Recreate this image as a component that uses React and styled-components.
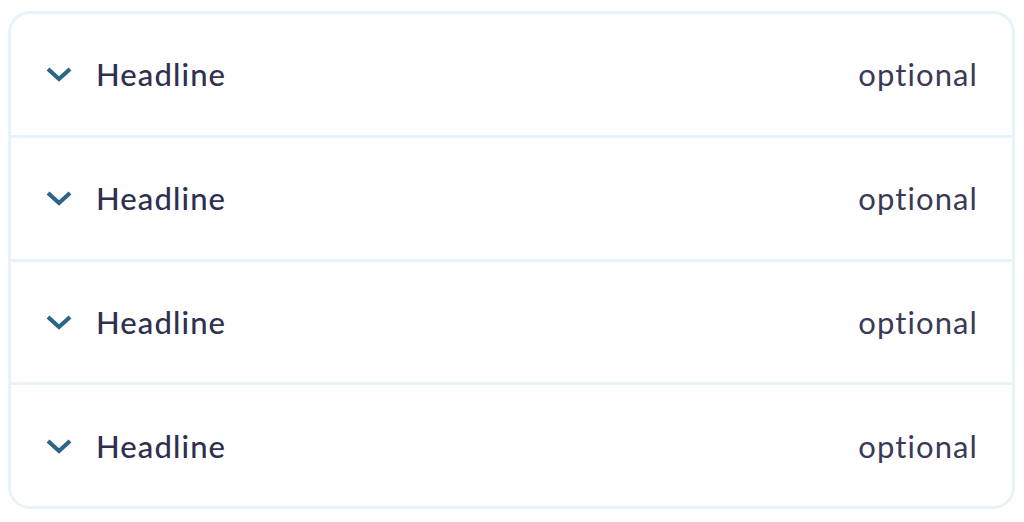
import React from "react";
import styled, { createGlobalStyle } from "styled-components";

const GlobalStyle = createGlobalStyle`
  html, body {
    margin: 0;
    padding: 0;
    background: #ffffff;
  }
  body {
    font-family: Lato, "Open Sans", sans-serif;
  }
`;

const Page = styled.div`
  width: 1024px;
  height: 522px;
  padding: 11px 9px 13px 8px;
  box-sizing: border-box;
`;

const Accordion = styled.div`
  height: 100%;
  box-sizing: border-box;
  border: 3px solid #e7f3f9;
  border-radius: 22px;
  display: flex;
  flex-direction: column;
  overflow: hidden;
`;

const Row = styled.div`
  flex: 1;
  display: flex;
  align-items: center;
  padding: 0 34px 0 34px;
  border-top: ${(p) => (p.$first ? "none" : "3px solid #e7f3f9")};
`;

const Chevron = styled.svg`
  width: 28px;
  height: 18px;
  flex: none;
  margin-right: 23px;
`;

const Title = styled.span`
  font-size: 31px;
  font-weight: 500;
  letter-spacing: 1.1px;
  color: #2f2f50;
  flex: 1;
`;

const Hint = styled.span`
  font-size: 31px;
  font-weight: 400;
  letter-spacing: 1.1px;
  color: #3a3a58;
`;

const items = ["Headline", "Headline", "Headline", "Headline"];

export default function App() {
  return (
    <>
      <GlobalStyle />
      <Page>
        <Accordion>
          {items.map((t, i) => (
            <Row key={i} $first={i === 0}>
              <Chevron viewBox="0 0 28 18">
                <path
                  d="M3 4 L14 14 L25 4"
                  fill="none"
                  stroke="#2b6689"
                  strokeWidth="4.2"
                  strokeLinecap="butt"
                  strokeLinejoin="miter"
                />
              </Chevron>
              <Title>{t}</Title>
              <Hint>optional</Hint>
            </Row>
          ))}
        </Accordion>
      </Page>
    </>
  );
}
